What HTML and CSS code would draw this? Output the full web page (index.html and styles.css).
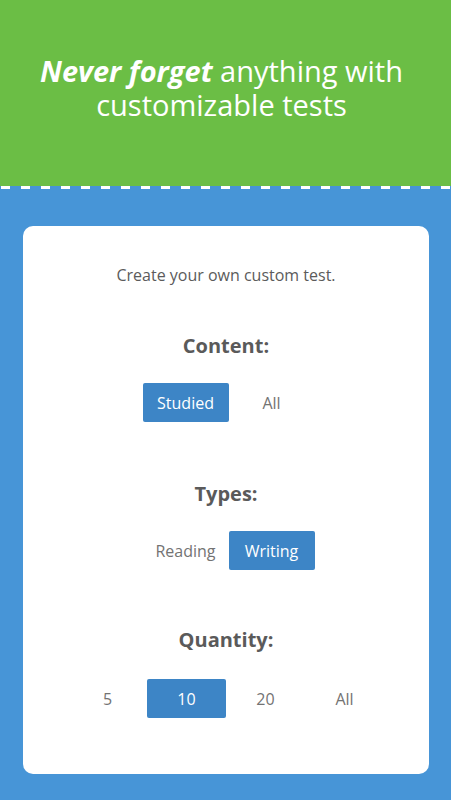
FILE: index.html
```html
<!DOCTYPE html>
<html>
<head>
<meta charset="utf-8">
<link rel="stylesheet" href="styles.css">
</head>
<body>
<header class="hero">
  <h1 class="hero-title"><em>Never forget</em> anything with<br>customizable tests</h1>
</header>
<div class="dashes"></div>
<main class="stage">
  <section class="card">
    <p class="intro">Create your own custom test.</p>
    <div class="group">
      <h2 class="label">Content:</h2>
      <div class="options pair">
        <span class="opt wide active">Studied</span>
        <span class="opt wide">All</span>
      </div>
    </div>
    <div class="group">
      <h2 class="label">Types:</h2>
      <div class="options pair">
        <span class="opt wide">Reading</span>
        <span class="opt wide active">Writing</span>
      </div>
    </div>
    <div class="group">
      <h2 class="label">Quantity:</h2>
      <div class="options">
        <span class="opt">5</span>
        <span class="opt active">10</span>
        <span class="opt">20</span>
        <span class="opt">All</span>
      </div>
    </div>
  </section>
</main>
</body>
</html>
```

FILE: styles.css
```css
html, body {
  margin: 0;
  padding: 0;
}
body {
  width: 451px;
  height: 800px;
  overflow: hidden;
  background: #4795d7;
  font-family: "Open Sans", "Noto Sans", sans-serif;
}
.hero {
  background: #6bbe45;
  height: 186px;
  box-sizing: border-box;
  padding: 54px 8px 0 0;
}
.hero-title {
  margin: 0;
  text-align: center;
  color: #fff;
  font-size: 29px;
  font-weight: 400;
  line-height: 34px;
}
.hero-title em {
  font-weight: 700;
  font-style: italic;
}
.dashes {
  height: 3px;
  background: repeating-linear-gradient(90deg, #4795d7 0, #4795d7 1px, #ffffff 1px, #ffffff 10px, #4795d7 10px, #4795d7 20px);
  background-color: #4795d7;
}
.stage {
  padding: 37px 22px 0 23px;
}
.card {
  background: #fff;
  border-radius: 10px;
  height: 548px;
  box-sizing: border-box;
  padding-top: 38px;
  display: flex;
  flex-direction: column;
  align-items: center;
}
.intro {
  margin: 0;
  font-size: 16px;
  line-height: 22px;
  color: #5b5b5b;
}
.group {
  display: flex;
  flex-direction: column;
  align-items: center;
  margin-top: 47px;
}
.group + .group {
  margin-top: 59px;
}
.group:last-child {
  margin-top: 57px;
}
.label {
  margin: 0 0 24px;
  font-size: 20px;
  line-height: 26px;
  font-weight: 700;
  color: #5a5a5a;
}
.group:last-child .label {
  margin-bottom: 26px;
}
.options {
  display: flex;
}
.options.pair {
  margin-left: 5px;
}
.opt {
  width: 79px;
  height: 39px;
  display: flex;
  align-items: center;
  justify-content: center;
  font-size: 16px;
  color: #737373;
  border-radius: 2px;
}
.opt.wide {
  width: 86px;
}
.opt.active {
  background: #3d85c6;
  color: #fff;
}
```
